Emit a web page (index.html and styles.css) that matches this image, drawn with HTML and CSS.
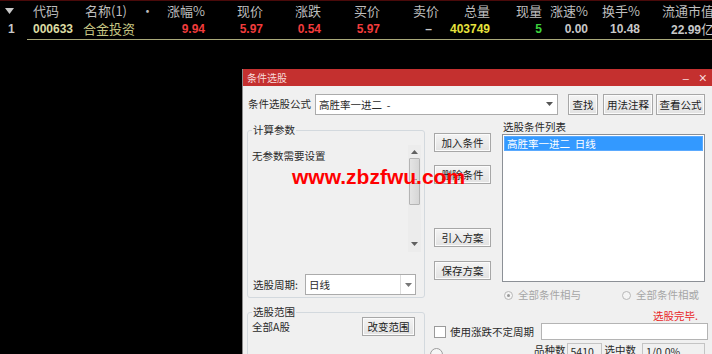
FILE: index.html
```html
<!DOCTYPE html>
<html lang="zh-CN">
<head>
<meta charset="utf-8">
<link rel="stylesheet" href="styles.css">
</head>
<body>
<div class="topline"></div>
<div class="quotes">
  <div class="qrow head">
    <span class="c0"><svg width="9" height="6" viewBox="0 0 9 6"><path d="M0 0H9L4.5 6Z" fill="#c8c8c8"/></svg></span>
    <span class="c1">代码</span>
    <span class="c2">名称(1)</span>
    <span class="c3">•</span>
    <span class="r">涨幅%</span>
    <span class="r">现价</span>
    <span class="r">涨跌</span>
    <span class="r">买价</span>
    <span class="r">卖价</span>
    <span class="r">总量</span>
    <span class="r">现量</span>
    <span class="r">涨速%</span>
    <span class="r">换手%</span>
    <span class="r">流通市值</span>
  </div>
  <div class="qrow data">
    <span class="c0 num">1</span>
    <span class="c1 num code">000633</span>
    <span class="c2 name">合金投资</span>
    <span class="c3"></span>
    <span class="r num red">9.94</span>
    <span class="r num red">5.97</span>
    <span class="r num red">0.54</span>
    <span class="r num red">5.97</span>
    <span class="r num dash">–</span>
    <span class="r num yellow">403749</span>
    <span class="r num green">5</span>
    <span class="r num">0.00</span>
    <span class="r num">10.48</span>
    <span class="r num">22.99<span class="yi">亿</span></span>
  </div>
</div>

<div class="dialog">
  <div class="titlebar">
    <span class="title">条件选股</span>
    <span class="ctrls"><span class="min">–</span><span class="close">×</span></span>
  </div>
  <div class="dlg-body">
    <div class="formula-row">
      <span class="lbl">条件选股公式</span>
      <div class="combo formula">
        <span class="combo-text">高胜率一进二&nbsp;&nbsp;-</span>
        <span class="combo-arrow"><svg width="7" height="4" viewBox="0 0 7 4"><path d="M0 0H7L3.5 4Z" fill="#555"/></svg></span>
      </div>
      <div class="btn b-find">查找</div>
      <div class="btn b-note">用法注释</div>
      <div class="btn b-view">查看公式</div>
    </div>

    <div class="main">
      <div class="left-col">
        <fieldset class="group g1">
          <legend>计算参数</legend>
          <div class="params">
            <span class="params-text">无参数需要设置</span>
            <div class="vscroll">
              <svg class="sc-up" width="7" height="4" viewBox="0 0 7 4"><path d="M0 4H7L3.5 0Z" fill="#606060"/></svg>
              <div class="thumb"><span class="grip"></span></div>
              <svg class="sc-down" width="7" height="4" viewBox="0 0 7 4"><path d="M0 0H7L3.5 4Z" fill="#606060"/></svg>
            </div>
          </div>
          <div class="period-row">
            <span class="lbl">选股周期:</span>
            <div class="combo period">
              <span class="combo-text">日线</span>
              <span class="combo-arrow sep"><svg width="7" height="4" viewBox="0 0 7 4"><path d="M0 0H7L3.5 4Z" fill="#777"/></svg></span>
            </div>
          </div>
        </fieldset>
        <fieldset class="group g2">
          <legend>选股范围</legend>
          <div class="range-row">
            <span class="lbl">全部A股</span>
            <div class="btn b-range">改变范围</div>
          </div>
        </fieldset>
      </div>

      <div class="right-area">
        <div class="upper">
          <div class="mid-col">
            <div class="btn b-add">加入条件</div>
            <div class="btn b-del">删除条件</div>
            <div class="btn b-imp">引入方案</div>
            <div class="btn b-save">保存方案</div>
          </div>
          <div class="list-col">
            <div class="list-label">选股条件列表</div>
            <div class="listbox">
              <div class="item selected">高胜率一进二&nbsp;&nbsp;日线</div>
            </div>
            <div class="radios">
              <span class="radio r1"><span class="rc on"></span>全部条件相与</span>
              <span class="radio r2"><span class="rc"></span>全部条件相或</span>
            </div>
            <div class="status">选股完毕.</div>
          </div>
        </div>
        <div class="check-row">
          <span class="chk"></span>
          <span class="lbl">使用涨跌不定周期</span>
          <div class="field f-period"></div>
        </div>
        <div class="count-row">
          <span class="big-radio"></span>
          <span class="lbl cnt-l1">品种数</span>
          <div class="field f-num">5410</div>
          <span class="lbl cnt-l2">选中数</span>
          <div class="field f-sel">1/0.0%</div>
        </div>
      </div>
    </div>
  </div>
</div>

<div class="watermark">www.zbzfwu.com</div>
</body>
</html>
```

FILE: styles.css
```css
* { box-sizing: border-box; }
html, body { margin: 0; padding: 0; }
body {
  background: #000;
  width: 712px;
  height: 354px;
  overflow: hidden;
  position: relative;
  font-family: "Noto Sans CJK SC", "Liberation Sans", sans-serif;
}

/* ---------- quote list ---------- */
.topline { height: 1px; background: #4a0a0a; }
.qrow {
  display: grid;
  grid-template-columns: 27px 53px 60px 15px 50px 58px 58px 59px 59px 51px 52px 46px 52px 74px;
  white-space: nowrap;
}
.qrow > span { display: block; overflow: visible; }
.head { height: 19px; line-height: 19px; font-size: 13px; color: #bdbdbd; }
.head .c0 { display: flex; align-items: center; justify-content: center; padding-right: 8px; }
.head .c1 { padding-left: 6px; }
.head .c2 { padding-left: 5px; }
.c3 { text-align: center; }
.r { text-align: right; }
.data { height: 19px; line-height: 18px; font-size: 12px; color: #c8c8c8; }
.data > span:not(.c0) { border-bottom: 1px solid #a9a97a; }
.num { font-family: "Liberation Sans", sans-serif; font-weight: bold; }
.data .c0 { padding-left: 8px; }
.data .c1 { padding-left: 6px; }
.code { color: #dcdca4; }
.name { color: #c6c684; font-size: 13px; padding-left: 3px; }
.red { color: #f23c3c; }
.yellow { color: #e6e23c; }
.green { color: #3cd23c; }
.dash { padding-right: 7px; }
.yi { font-family: "Noto Sans CJK SC", sans-serif; font-weight: normal; font-size: 13px; }

/* ---------- dialog window ---------- */
.dialog {
  position: absolute;
  left: 242px;
  top: 69px;
  width: 470px;
  height: 290px;
  background: #f0f0f0;
  border-left: 1px solid #8c8c8c;
  font-size: 10.5px;
  color: #2a2a2a;
}
.titlebar {
  height: 17px;
  background: #c4302f;
  display: flex;
  align-items: center;
  padding-left: 4px;
  color: #f7dada;
  font-size: 10px;
}
.ctrls { margin-left: auto; display: flex; align-items: center; font-family: "Liberation Sans", sans-serif; }
.ctrls .min { font-size: 11px; margin-right: 10px; }
.ctrls .close { font-size: 14px; margin-right: 5px; }

.dlg-body { padding-left: 4px; }
.lbl { white-space: nowrap; line-height: 14px; }

.btn {
  height: 21px;
  border: 1px solid #a7a7a7;
  background: linear-gradient(#f4f4f4, #e2e2e2);
  box-shadow: inset 0 0 0 1px #fbfbfb;
  display: flex;
  align-items: center;
  justify-content: center;
  white-space: nowrap;
  color: #222;
}

.formula-row { display: flex; align-items: center; height: 22px; margin-top: 7px; }
.formula-row > .lbl { margin-left: 1px; }
.combo {
  height: 21px;
  background: #fff;
  border: 1px solid #ababab;
  display: flex;
  align-items: center;
}
.combo-text { flex: 1; padding-left: 3px; white-space: nowrap; }
.combo-arrow { width: 15px; height: 100%; display: flex; align-items: center; justify-content: center; }
.combo-arrow.sep { border-left: 1px solid #dcdcdc; }
.formula { margin-left: 4px; width: 243px; }
.b-find { margin-left: 10px; width: 30px; }
.b-note { margin-left: 5px; width: 50px; }
.b-view { margin-left: 3px; width: 49px; }

.main { display: flex; margin-top: 5px; }
.left-col { width: 178px; padding-top: 3px; }
.group {
  margin: 0;
  padding: 0;
  border: 1px solid #d3d9de;
  border-radius: 3px;
  min-width: 0;
}
.group legend {
  margin-left: 4px;
  padding: 0 1px;
  line-height: 14px;
  font-size: 10.5px;
}
.g1 { height: 175px; }
.params { display: flex; height: 107px; margin-top: 8px; padding-left: 4px; }
.params-text { padding-top: 4px; line-height: 14px; }
.vscroll {
  margin-left: auto;
  margin-right: 3px;
  width: 13px;
  height: 100%;
  background: #ececec;
  display: flex;
  flex-direction: column;
  align-items: center;
}
.sc-up { margin-top: 5px; }
.thumb {
  margin-top: 4px;
  width: 11px;
  height: 47px;
  background: linear-gradient(90deg, #e4e4e4, #d6d6d6);
  border: 1px solid #b4b4b4;
  border-radius: 1px;
  display: flex;
  align-items: center;
  justify-content: center;
}
.grip { width: 5px; height: 5px; border-top: 1px solid #9a9a9a; border-bottom: 1px solid #9a9a9a; }
.sc-down { margin-top: auto; margin-bottom: 6px; }

.period-row { display: flex; align-items: center; height: 21px; margin-top: 22px; padding-left: 5px; }
.period { margin-left: auto; margin-right: 8px; width: 111px; }

.g2 { height: 60px; margin-top: 7px; }
.range-row { display: flex; align-items: center; height: 19px; margin-top: -2px; padding-left: 4px; }
.b-range { margin-left: auto; margin-right: 9px; width: 53px; height: 19px; }

.right-area { flex: 1; display: flex; flex-direction: column; }
.upper { display: flex; }
.mid-col { margin-left: 9px; width: 57px; display: flex; flex-direction: column; }
.mid-col .btn { height: 19px; }
.b-add { margin-top: 13px; }
.b-del { margin-top: 13px; }
.b-imp { margin-top: 44px; }
.b-save { margin-top: 14px; }

.list-col { margin-left: 11px; width: 203px; }
.list-label { height: 14px; line-height: 14px; padding-left: 1px; }
.listbox { height: 148px; background: #fff; border: 1px solid #8c9096; padding: 1px; }
.item { height: 15px; line-height: 15px; padding-left: 2px; white-space: nowrap; }
.item.selected { background: #3399ff; color: #fff; border: 1px solid #5aaaff; line-height: 13px; }
.radios { display: flex; height: 14px; margin-top: 6px; line-height: 14px; color: #a6a6a6; }
.radio { display: flex; align-items: center; white-space: nowrap; }
.r1 { margin-left: 2px; }
.r2 { margin-left: 41px; }
.rc {
  width: 9px; height: 9px;
  border: 1px solid #b8b8b8;
  border-radius: 50%;
  margin-right: 5px;
  display: flex; align-items: center; justify-content: center;
  background: #f4f4f4;
}
.rc.on::after { content: ""; width: 3px; height: 3px; border-radius: 50%; background: #9a9a9a; }
.status { height: 14px; line-height: 14px; margin-top: 7px; text-align: right; padding-right: 7px; color: #e82828; }

.check-row { display: flex; align-items: center; height: 17px; padding-left: 9px; }
.chk { width: 12px; height: 12px; border: 1px solid #9a9a9a; background: #fff; margin-right: 4px; }
.field {
  height: 17px;
  background: #fff;
  border: 1px solid #b4b4b4;
  line-height: 15px;
  padding-left: 3px;
  white-space: nowrap;
}
.f-period { margin-left: 7px; width: 167px; }

.count-row { display: flex; align-items: flex-start; height: 16px; margin-top: 3px; }
.big-radio { width: 13px; height: 13px; border: 1px solid #9c9c9c; border-radius: 50%; margin-left: 5px; margin-top: 5px; background: #f6f6f6; }
.cnt-l1 { margin-left: auto; }
.f-num { margin-left: 1px; width: 35px; height: 16px; background: #f0f0f0; border-color: #c4c4c4; }
.cnt-l2 { margin-left: 3px; }
.f-sel { margin-left: 6px; width: 63px; margin-right: 7px; height: 16px; background: #f0f0f0; border-color: #c4c4c4; }

/* ---------- watermark over everything ---------- */
.watermark {
  position: absolute;
  left: 292px;
  top: 166px;
  font-family: "Liberation Sans", sans-serif;
  font-weight: bold;
  font-size: 21px;
  line-height: 21px;
  color: #ff0000;
  white-space: nowrap;
}
```
